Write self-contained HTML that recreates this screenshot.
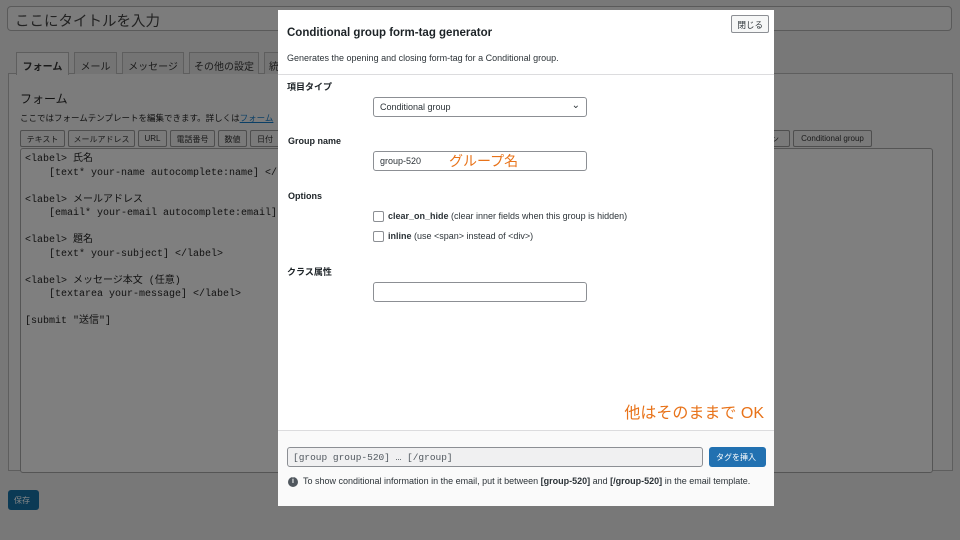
<!DOCTYPE html>
<html><head><meta charset="utf-8"><style>
*{box-sizing:border-box;margin:0;padding:0}
body{width:960px;height:540px;background:#787878;font-family:"Liberation Sans","Noto Sans CJK JP",sans-serif;position:relative;overflow:hidden;color:#111}
.a{position:absolute}
.title{left:7px;top:6px;width:945px;height:25px;border:1px solid #5a5a5a;border-radius:4px;background:#7c7c7c;font-size:14.5px;color:#222;padding:3px 7px}
.tab{top:52px;height:22px;border:1px solid #5e5e5e;border-bottom:none;background:#747474;font-size:10px;padding:5px 0;text-align:center;color:#1a1a1a}
.panel{left:8px;top:73px;width:945px;height:398px;border:1px solid #5e5e5e;background:#7c7c7c}
.btn{top:130px;height:17px;border:1px solid #4e4e4e;border-radius:2px;background:#7a7a7a;font-size:8px;padding:3px 0;text-align:center;color:#1a1a1a;white-space:nowrap;overflow:hidden}
.ta{left:20px;top:148px;width:913px;height:325px;border:1px solid #555;border-radius:3px;background:#7f7f7f;font-family:"Liberation Mono","Noto Sans CJK JP",monospace;font-size:10px;line-height:13.5px;padding:4px 4px;white-space:pre;color:#111}
.modal{left:278px;top:10px;width:496px;height:496px;background:#fff}
.lbl{font-size:9px;font-weight:bold;color:#1d2327;left:9px}
.inp{left:95px;width:214px;height:20px;border:1px solid #8c8f94;border-radius:3px;font-size:9px;padding:4px 6px;color:#2c3338;background:#fff}
.cb{left:95px;width:11px;height:11px;border:1px solid #8c8f94;border-radius:2px}
.ct{left:110px;font-size:9px;color:#2c3338}
</style></head><body>
<div class="a title">ここにタイトルを入力</div>
<div class="a panel"></div>
<div class="a tab" style="left:16px;width:53px;background:#7c7c7c;font-weight:bold;height:23px">フォーム</div>
<div class="a tab" style="left:74px;width:43px">メール</div>
<div class="a tab" style="left:122px;width:62px">メッセージ</div>
<div class="a tab" style="left:189px;width:70px">その他の設定</div>
<div class="a tab" style="left:264px;width:20px">統</div>
<div class="a" style="left:20px;top:90px;font-size:12px">フォーム</div>
<div class="a" style="left:20px;top:112px;font-size:8.5px">ここではフォームテンプレートを編集できます。詳しくは<span style="color:#0a3f66;text-decoration:underline">フォーム</span></div>
<div class="a btn" style="left:20px;width:45px">テキスト</div>
<div class="a btn" style="left:68px;width:67px">メールアドレス</div>
<div class="a btn" style="left:138px;width:29px">URL</div>
<div class="a btn" style="left:170px;width:45px">電話番号</div>
<div class="a btn" style="left:218px;width:29px">数値</div>
<div class="a btn" style="left:250px;width:30px">日付</div>
<div class="a btn" style="left:760px;width:30px">ン</div>
<div class="a btn" style="left:793px;width:79px">Conditional group</div>
<div class="a ta">&lt;label&gt; 氏名
    [text* your-name autocomplete:name] &lt;/label&gt;

&lt;label&gt; メールアドレス
    [email* your-email autocomplete:email] &lt;/label&gt;

&lt;label&gt; 題名
    [text* your-subject] &lt;/label&gt;

&lt;label&gt; メッセージ本文 (任意)
    [textarea your-message] &lt;/label&gt;

[submit "送信"]</div>
<div class="a" style="left:8px;top:490px;width:31px;height:20px;background:#0b3a55;border-radius:3px;color:#888;font-size:8px;padding:5px 6px">保存</div>

<div class="a modal">
 <div class="a" style="right:5px;top:5px;height:18px;border:1px solid #8c8f94;border-radius:2px;background:#f6f7f7;font-size:8.5px;padding:3px 5px;color:#2c3338">閉じる</div>
 <div class="a" style="left:9px;top:17px;font-size:11.5px;font-weight:bold;color:#1d2327">Conditional group form-tag generator</div>
 <div class="a" style="left:9px;top:43px;font-size:9px;color:#2c3338">Generates the opening and closing form-tag for a Conditional group.</div>
 <div class="a" style="left:0;top:64px;width:496px;height:1px;background:#dcdcde"></div>
 <div class="a lbl" style="top:70px">項目タイプ</div>
 <div class="a inp" style="top:87px">Conditional group<span style="position:absolute;right:6px;top:2px;font-size:10px">⌄</span></div>
 <div class="a lbl" style="left:10px;top:126px">Group name</div>
 <div class="a inp" style="top:141px">group-520<span style="position:absolute;left:75px;top:-1px;font-size:14px;color:#e8731a">グループ名</span></div>
 <div class="a lbl" style="left:10px;top:181px">Options</div>
 <div class="a cb" style="top:201px"></div>
 <div class="a ct" style="top:201px"><b>clear_on_hide</b> (clear inner fields when this group is hidden)</div>
 <div class="a cb" style="top:221px"></div>
 <div class="a ct" style="top:221px"><b>inline</b> (use &lt;span&gt; instead of &lt;div&gt;)</div>
 <div class="a lbl" style="top:255px">クラス属性</div>
 <div class="a inp" style="top:272px"></div>
 <div class="a" style="right:10px;top:389px;font-size:16px;color:#e8731a">他はそのままで OK</div>
 <div class="a" style="left:0;top:420px;width:496px;height:76px;background:#fafafa;border-top:1px solid #dcdcde"></div>
 <div class="a" style="left:9px;top:437px;width:416px;height:20px;border:1px solid #8c8f94;border-radius:3px;background:#f0f0f1;font-family:'Liberation Mono',monospace;font-size:9.5px;padding:4px 5px;color:#50575e">[group group-520] … [/group]</div>
 <div class="a" style="left:431px;top:437px;width:57px;height:20px;background:#2271b1;border-radius:3px;color:#fff;font-size:8px;padding:5px 7px">タグを挿入</div>
 <div class="a" style="left:10px;top:467px;width:10px;height:10px;border-radius:50%;background:#50575e;color:#fff;font-size:7px;font-weight:bold;text-align:center;line-height:10px">i</div>
 <div class="a" style="left:25px;top:466px;font-size:9px;color:#2c3338;white-space:nowrap">To show conditional information in the email, put it between <b>[group-520]</b> and <b>[/group-520]</b> in the email template.</div>
</div>
</body></html>
